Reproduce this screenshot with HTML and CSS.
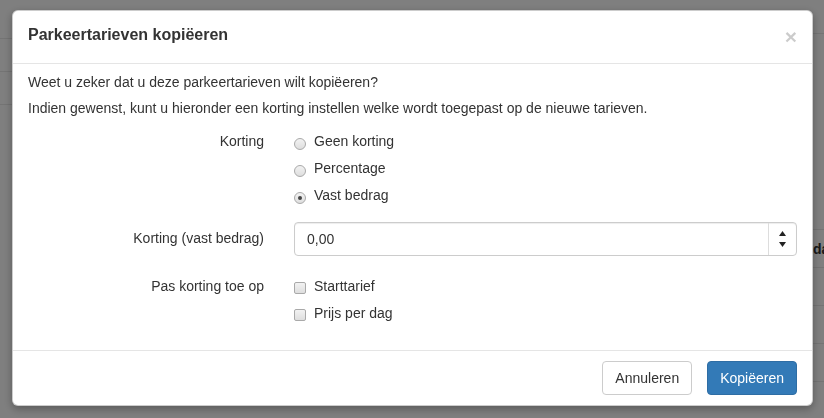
FILE: index.html
```html
<!DOCTYPE html>
<html lang="nl">
<head>
<meta charset="utf-8">
<title>Parkeertarieven kopiëeren</title>
<link rel="stylesheet" href="styles.css">
</head>
<body>
<div class="page">
  <div class="page-nav">
    <div class="nav-row nav-first"></div>
    <div class="nav-row"></div>
    <div class="nav-row"></div>
  </div>
  <div class="page-main">
    <div class="main-head"></div>
    <div class="main-spacer"></div>
    <div class="main-row"><span class="row-gap"></span><span class="row-text">dag</span></div>
    <div class="main-row"></div>
    <div class="main-row"></div>
    <div class="main-row"></div>
    <div class="main-row"></div>
  </div>
</div>
<div class="backdrop"></div>
<div class="modal">
  <div class="modal-dialog">
    <div class="modal-content">
      <div class="modal-header">
        <h4 class="modal-title">Parkeertarieven kopiëeren</h4>
        <button type="button" class="close">×</button>
      </div>
      <div class="modal-body">
        <p class="intro">Weet u zeker dat u deze parkeertarieven wilt kopiëeren?</p>
        <p class="intro">Indien gewenst, kunt u hieronder een korting instellen welke wordt toegepast op de nieuwe tarieven.</p>
        <form class="form-horizontal">
          <div class="form-group group-radios">
            <div class="control-label">Korting</div>
            <div class="controls">
              <label class="option"><span class="radio"></span>Geen korting</label>
              <label class="option"><span class="radio"></span>Percentage</label>
              <label class="option"><span class="radio checked"></span>Vast bedrag</label>
            </div>
          </div>
          <div class="form-group group-input">
            <div class="control-label label-input">Korting (vast bedrag)</div>
            <div class="controls">
              <div class="number-input">
                <span class="number-value">0,00</span>
                <span class="spinner">
                  <svg width="7" height="5" viewBox="0 0 7 5"><polygon points="3.5,0 7,5 0,5" fill="#222"/></svg>
                  <svg width="7" height="5" viewBox="0 0 7 5"><polygon points="0,0 7,0 3.5,5" fill="#222"/></svg>
                </span>
              </div>
            </div>
          </div>
          <div class="form-group group-checks">
            <div class="control-label">Pas korting toe op</div>
            <div class="controls">
              <label class="option"><span class="checkbox"></span>Starttarief</label>
              <label class="option"><span class="checkbox"></span>Prijs per dag</label>
            </div>
          </div>
        </form>
      </div>
      <div class="modal-footer">
        <button type="button" class="btn btn-default">Annuleren</button>
        <button type="button" class="btn btn-primary">Kopiëeren</button>
      </div>
    </div>
  </div>
</div>
</body>
</html>
```
FILE: styles.css
```css
* { box-sizing: border-box; }
html, body {
  margin: 0;
  height: 100%;
  overflow: hidden;
}
body {
  font-family: "Liberation Sans", Arial, Helvetica, sans-serif;
  font-size: 14px;
  line-height: 20px;
  color: #333;
  background: #fff;
}

/* underlying page */
.page {
  display: flex;
  height: 418px;
}
.page-nav {
  flex: none;
  width: 400px;
}
.nav-row {
  height: 33px;
  border-bottom: 1px solid #e8e8e8;
}
.nav-row.nav-first {
  height: 39px;
}
.page-main {
  flex: 1;
  min-width: 0;
  overflow: hidden;
}
.main-head {
  height: 34px;
  border-bottom: 1px solid #e8e8e8;
}
.main-spacer {
  height: 196px;
  border-bottom: 1px solid #e8e8e8;
}
.main-row {
  display: flex;
  align-items: center;
  height: 38px;
  border-bottom: 1px solid #e8e8e8;
}
.row-gap {
  width: 413px;
  flex: none;
}
.row-text {
  font-weight: bold;
  color: #333;
  white-space: nowrap;
}

.backdrop {
  position: fixed;
  inset: 0;
  background: rgba(0, 0, 0, 0.5);
}

/* modal */
.modal {
  position: fixed;
  inset: 0;
  overflow: hidden;
}
.modal-dialog {
  width: 801px;
  margin: 10px 0 0 12px;
}
.modal-content {
  background: #fff;
  border: 1px solid rgba(0, 0, 0, 0.2);
  border-radius: 6px;
  box-shadow: 0 3px 9px rgba(0, 0, 0, 0.3);
}
.modal-header {
  display: flex;
  justify-content: space-between;
  align-items: flex-start;
  padding: 13px 15px 16px;
  border-bottom: 1px solid #e5e5e5;
}
.modal-title {
  margin: 0;
  font-size: 16px;
  font-weight: bold;
  line-height: 22px;
  color: #333;
}
.close {
  border: 0;
  background: transparent;
  padding: 0;
  margin-top: 2px;
  font-family: "Liberation Sans", Arial, sans-serif;
  font-size: 21px;
  font-weight: bold;
  line-height: 1;
  color: #000;
  opacity: 0.2;
}

.modal-body {
  padding: 8px 15px 12px;
}
.intro {
  margin: 0 0 6px;
}

.form-horizontal {
  margin: 0 -15px;
}
.form-group {
  display: grid;
  grid-template-columns: 266px 1fr;
}
.group-radios { margin-bottom: 17px; }
.group-input { margin-bottom: 13px; }
.group-checks { margin-bottom: 15px; }

.control-label {
  text-align: right;
  padding: 7px 15px 0;
}
.control-label.label-input {
  padding-top: 6px;
}
.controls {
  padding: 0 15px;
}
.option {
  display: flex;
  align-items: flex-start;
  min-height: 27px;
  padding-top: 7px;
}
.radio,
.checkbox {
  flex: none;
  width: 12px;
  height: 12px;
  margin: 6px 8px 0 0;
  border: 1px solid #a9a9a9;
  background: linear-gradient(#f2f2f2, #dedede);
}
.radio {
  border-radius: 50%;
  margin-top: 7px;
  display: flex;
  align-items: center;
  justify-content: center;
}
.radio.checked::after {
  content: "";
  width: 4px;
  height: 4px;
  border-radius: 50%;
  background: #444;
}
.checkbox {
  border-radius: 2px;
}

.number-input {
  display: flex;
  height: 34px;
  border: 1px solid #ccc;
  border-radius: 4px;
  box-shadow: inset 0 1px 1px rgba(0, 0, 0, 0.075);
}
.number-value {
  flex: 1;
  padding: 6px 12px;
  color: #333;
}
.spinner {
  width: 28px;
  border-left: 1px solid #ddd;
  display: flex;
  flex-direction: column;
  align-items: center;
  justify-content: center;
  gap: 6px;
}
.spinner svg {
  display: block;
}

.modal-footer {
  display: flex;
  justify-content: flex-end;
  gap: 15px;
  padding: 10px 15px;
  border-top: 1px solid #e5e5e5;
}
.btn {
  font-family: "Liberation Sans", Arial, sans-serif;
  font-size: 14px;
  line-height: 20px;
  padding: 6px 12px;
  border: 1px solid transparent;
  border-radius: 4px;
}
.btn-default {
  background: #fff;
  color: #333;
  border-color: #ccc;
}
.btn-primary {
  background: #337ab7;
  color: #fff;
  border-color: #2e6da4;
}
```
